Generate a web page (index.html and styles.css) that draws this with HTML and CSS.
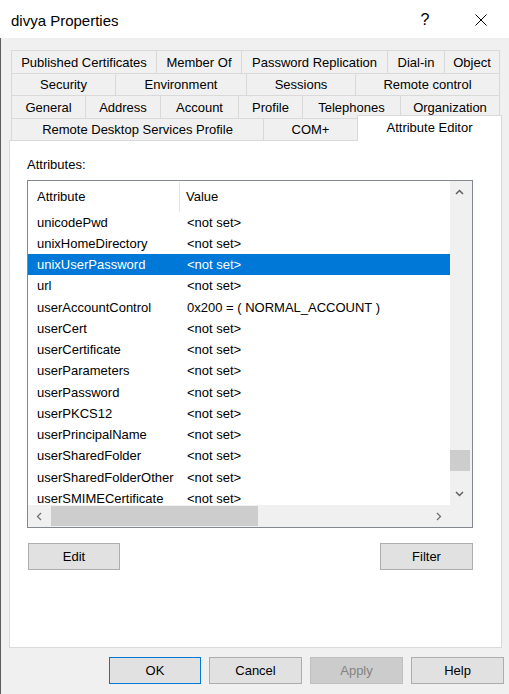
FILE: index.html
```html
<!DOCTYPE html>
<html>
<head>
<meta charset="utf-8">
<title>divya Properties</title>
<link rel="stylesheet" href="styles.css">
</head>
<body>
<div class="titlebar">
  <span class="title">divya Properties</span>
  <span class="capbtn help">?</span>
  <span class="capbtn close">
    <svg width="12" height="12" viewBox="0 0 12 12"><path d="M0.5 0.5 L11.5 11.5 M11.5 0.5 L0.5 11.5" stroke="#000" stroke-width="1" fill="none"/></svg>
  </span>
</div>
<div class="main">
  <div class="tabs">
    <div class="tabrow r1">
      <div class="tab">Published Certificates</div>
      <div class="tab">Member Of</div>
      <div class="tab">Password Replication</div>
      <div class="tab">Dial-in</div>
      <div class="tab last">Object</div>
    </div>
    <div class="tabrow r2">
      <div class="tab">Security</div>
      <div class="tab">Environment</div>
      <div class="tab">Sessions</div>
      <div class="tab last">Remote control</div>
    </div>
    <div class="tabrow r3">
      <div class="tab">General</div>
      <div class="tab">Address</div>
      <div class="tab">Account</div>
      <div class="tab">Profile</div>
      <div class="tab">Telephones</div>
      <div class="tab last">Organization</div>
    </div>
    <div class="tabrow r4">
      <div class="tab">Remote Desktop Services Profile</div>
      <div class="tab">COM+</div>
      <div class="tab active">Attribute Editor</div>
    </div>
  </div>
  <div class="panel">
    <div class="label">Attributes:</div>
    <div class="listbox">
      <div class="content">
        <div class="header">
          <div class="col1 hcell">Attribute</div>
          <div class="col2 hcell">Value</div>
        </div>
        <div class="rows">
          <div class="row"><div class="col1">unicodePwd</div><div class="col2">&lt;not set&gt;</div></div>
          <div class="row"><div class="col1">unixHomeDirectory</div><div class="col2">&lt;not set&gt;</div></div>
          <div class="row selected"><div class="col1">unixUserPassword</div><div class="col2">&lt;not set&gt;</div></div>
          <div class="row"><div class="col1">url</div><div class="col2">&lt;not set&gt;</div></div>
          <div class="row"><div class="col1">userAccountControl</div><div class="col2">0x200 = ( NORMAL_ACCOUNT )</div></div>
          <div class="row"><div class="col1">userCert</div><div class="col2">&lt;not set&gt;</div></div>
          <div class="row"><div class="col1">userCertificate</div><div class="col2">&lt;not set&gt;</div></div>
          <div class="row"><div class="col1">userParameters</div><div class="col2">&lt;not set&gt;</div></div>
          <div class="row"><div class="col1">userPassword</div><div class="col2">&lt;not set&gt;</div></div>
          <div class="row"><div class="col1">userPKCS12</div><div class="col2">&lt;not set&gt;</div></div>
          <div class="row"><div class="col1">userPrincipalName</div><div class="col2">&lt;not set&gt;</div></div>
          <div class="row"><div class="col1">userSharedFolder</div><div class="col2">&lt;not set&gt;</div></div>
          <div class="row"><div class="col1">userSharedFolderOther</div><div class="col2">&lt;not set&gt;</div></div>
          <div class="row"><div class="col1">userSMIMECertificate</div><div class="col2">&lt;not set&gt;</div></div>
        </div>
      </div>
      <div class="vscroll">
        <div class="sbtn">
          <svg width="9" height="6" viewBox="0 0 9 6"><polyline points="1,5 4.5,1.5 8,5" fill="none" stroke="#606060" stroke-width="1.5"/></svg>
        </div>
        <div class="vtrack"><div class="vthumb"></div></div>
        <div class="sbtn">
          <svg width="9" height="6" viewBox="0 0 9 6"><polyline points="1,1 4.5,4.5 8,1" fill="none" stroke="#606060" stroke-width="1.5"/></svg>
        </div>
      </div>
      <div class="hscroll">
        <div class="hbtn">
          <svg width="6" height="9" viewBox="0 0 6 9"><polyline points="5,1 1.5,4.5 5,8" fill="none" stroke="#707070" stroke-width="1.3"/></svg>
        </div>
        <div class="htrack"><div class="hthumb"></div></div>
        <div class="hbtn">
          <svg width="6" height="9" viewBox="0 0 6 9"><polyline points="1,1 4.5,4.5 1,8" fill="none" stroke="#707070" stroke-width="1.3"/></svg>
        </div>
      </div>
      <div class="corner"></div>
    </div>
    <div class="actions">
      <button class="btn edit">Edit</button>
      <button class="btn">Filter</button>
    </div>
  </div>
  <div class="footer">
    <button class="btn default">OK</button>
    <button class="btn">Cancel</button>
    <button class="btn disabled">Apply</button>
    <button class="btn">Help</button>
  </div>
</div>
</body>
</html>
```
FILE: styles.css
```css
* { box-sizing: border-box; }
html, body {
  margin: 0;
  padding: 0;
}
body {
  width: 509px;
  height: 694px;
  overflow: hidden;
  background: #f0f0f0;
  font-family: "Liberation Sans", Arial, sans-serif;
  font-size: 13px;
  color: #000;
}
.titlebar {
  height: 38px;
  background: #fff;
  display: flex;
  align-items: center;
  padding-top: 2px;
}
.title {
  margin-left: 11px;
  font-size: 15px;
}
.capbtn {
  width: 56px;
  height: 36px;
  display: flex;
  align-items: center;
  justify-content: center;
}
.help {
  margin-left: auto;
  font-size: 16px;
}
.main {
  height: 656px;
  border-left: 1px solid #5e5e5e;
  padding-top: 12px;
}
.tabs {
  margin-left: 10px;
  width: 491px;
}
.tabrow {
  display: grid;
}
.r1 { height: 23px; grid-template-columns: 145px 85px 146px 57px 56px; }
.r2 { height: 22px; grid-template-columns: 104px 131px 109px 145px; }
.r3 { height: 23px; grid-template-columns: 74px 75px 78px 64px 98px 100px; }
.r4 { height: 22px; grid-template-columns: 252px 94px 145px; }
.tab {
  border-left: 1px solid #d9d9d9;
  border-top: 1px solid #d9d9d9;
  display: flex;
  align-items: center;
  justify-content: center;
  white-space: nowrap;
  background: #f0f0f0;
}
.tab.last { border-right: 1px solid #d9d9d9; }
.tab.active {
  position: relative;
  z-index: 1;
  background: #fff;
  border-right: 1px solid #d9d9d9;
  margin-top: -3px;
  margin-bottom: -1px;
  align-items: flex-start;
  padding-top: 4px;
}
.panel {
  margin: 0 7px 0 8px;
  height: 508px;
  background: #fff;
  border: 1px solid #d9d9d9;
  padding: 16px 0 0 17px;
}
.label {
  line-height: 16px;
  height: 16px;
}
.listbox {
  margin-top: 7px;
  width: 446px;
  height: 348px;
  border: 1px solid #828790;
  display: grid;
  grid-template-columns: 422px 22px;
  grid-template-rows: 324px 22px;
  background: #fff;
}
.content {
  overflow: hidden;
}
.header {
  height: 30.5px;
  display: flex;
}
.hcell {
  display: flex;
  align-items: center;
}
.header .col1 {
  border-right: 1px solid #e5e5e5;
  margin-top: 1px;
}
.col1 {
  width: 152px;
  padding-left: 9px;
  white-space: nowrap;
}
.col2 {
  padding-left: 6px;
  white-space: nowrap;
}
.row {
  height: 21.25px;
  display: flex;
  align-items: center;
}
.row .col2 { padding-left: 7px; }
.row.selected {
  background: #0078d7;
  color: #fff;
}
.vscroll {
  background: #f0f0f0;
  display: flex;
  flex-direction: column;
}
.sbtn {
  height: 22px;
  display: flex;
  align-items: center;
  justify-content: center;
  padding-right: 3px;
}
.vtrack {
  flex: 1;
  padding-top: 247px;
}
.vthumb {
  width: 20px;
  height: 21px;
  background: #cdcdcd;
}
.hscroll {
  background: #f0f0f0;
  display: flex;
}
.hbtn {
  width: 22px;
  display: flex;
  align-items: center;
  justify-content: center;
}
.htrack {
  flex: 1;
  padding: 1px 0 1px 1px;
}
.hthumb {
  width: 207px;
  height: 20px;
  background: #cdcdcd;
}
.corner {
  background: #f0f0f0;
}
.actions {
  margin-top: 15px;
  width: 446px;
  display: flex;
  justify-content: space-between;
}
.btn {
  width: 93px;
  height: 27px;
  background: #e1e1e1;
  border: 1px solid #adadad;
  font-family: "Liberation Sans", Arial, sans-serif;
  font-size: 13px;
  color: #000;
  padding: 0;
  margin: 0;
}
.btn.edit {
  width: 92px;
  margin-left: 1px;
}
.btn.default {
  border-color: #0078d7;
  width: 92px;
}
.btn.disabled {
  background: #cccccc;
  border-color: #bfbfbf;
  color: #838383;
}
.footer {
  margin-top: 9px;
  display: flex;
  justify-content: flex-end;
  gap: 8px;
  padding-right: 5px;
}
```
